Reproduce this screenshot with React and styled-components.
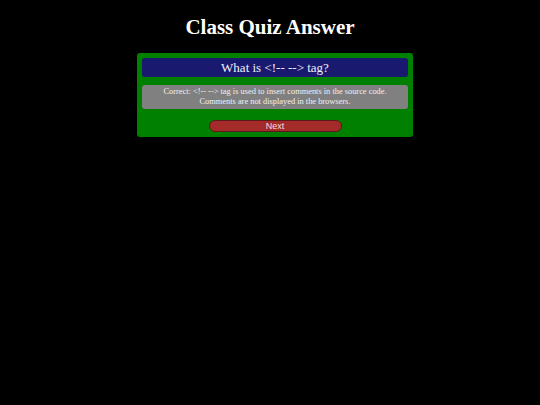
import React from "react";
import styled, { createGlobalStyle } from "styled-components";

const GlobalStyle = createGlobalStyle`
  html, body {
    margin: 0;
    padding: 0;
    background-color: #000;
  }
  body {
    font-family: "Liberation Serif", "Times New Roman", serif;
    color: #fff;
  }
`;

const Page = styled.div`
  display: flex;
  flex-direction: column;
  align-items: center;
  padding-top: 12px;
`;

const Title = styled.h1`
  margin: 0 0 11px;
  font-size: 21px;
  font-weight: bold;
  line-height: 30px;
  color: #fff;
`;

const Card = styled.div`
  width: 266px;
  margin-left: 10px;
  padding: 5px;
  background-color: #008000;
  border-radius: 3px;
  display: flex;
  flex-direction: column;
  align-items: center;
  gap: 8px;
`;

const Question = styled.div`
  align-self: stretch;
  background-color: #191970;
  border-radius: 3px;
  font-size: 13px;
  line-height: 19px;
  text-align: center;
  color: #f0f0f8;
`;

const Feedback = styled.div`
  align-self: stretch;
  background-color: #808080;
  border-radius: 3px;
  padding: 2px 4px;
  font-size: 8.4px;
  line-height: 10px;
  text-align: center;
  color: #f0f0f0;
`;

const NextButton = styled.button`
  margin: 3px 0 0;
  width: 133px;
  height: 12px;
  padding: 0;
  background-color: #a52a2a;
  border: 1px solid #5a1a1a;
  border-radius: 6px;
  color: #f5dede;
  font-family: "Liberation Sans", Arial, sans-serif;
  font-size: 9px;
  line-height: 10px;
  cursor: pointer;
`;

export default function App() {
  return (
    <>
      <GlobalStyle />
      <Page>
        <Title>Class Quiz Answer</Title>
        <Card>
          <Question>What is &lt;!-- --&gt; tag?</Question>
          <Feedback>
            Correct: &lt;!-- --&gt; tag is used to insert comments in the source code.
            <br />
            Comments are not displayed in the browsers.
          </Feedback>
          <NextButton>Next</NextButton>
        </Card>
      </Page>
    </>
  );
}
